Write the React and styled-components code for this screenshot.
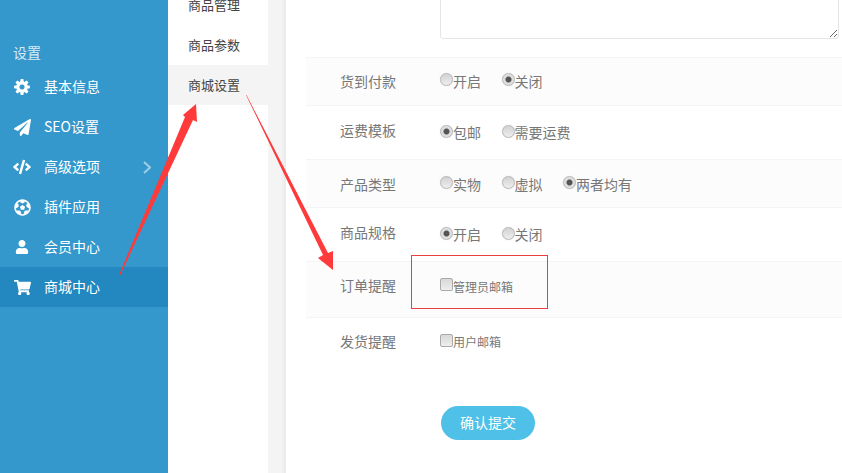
import React from "react";
import styled, { createGlobalStyle } from "styled-components";
import { FaPaperPlane, FaCode, FaFutbol, FaUser, FaShoppingCart } from "react-icons/fa";

const Global = createGlobalStyle`
  html, body { margin: 0; padding: 0; height: 473px; overflow: hidden; background: #fff; }
  body { font-family: "Noto Sans CJK SC", "Liberation Sans", sans-serif; }
`;
const Page = styled.div`
  position: relative; display: flex; width: 842px; height: 473px; overflow: hidden;
`;
const Sidebar = styled.nav`
  width: 168px; flex: none; background: #3498cc; padding-top: 44px; box-sizing: border-box;
`;
const SideTitle = styled.div`
  height: 23px; line-height: 16px; padding-left: 13px; font-size: 14px; color: #d6ebf5;
`;
const SideItem = styled.div`
  display: flex; align-items: center; height: 40px; font-size: 14px; color: #fff;
  line-height: 18px; padding-bottom: 2px; box-sizing: border-box;
  background: ${p => (p.$active ? "#2288bf" : "transparent")};
`;
const SideIcon = styled.span`
  width: 44px; flex: none; display: flex; justify-content: center; padding-top: 2px;
  font-size: ${p => p.$size}px;
  svg { display: block; }
`;
const Chevron = styled.svg`
  margin-left: auto; margin-right: 17px; margin-top: 2px; display: block;
`;
const SubNav = styled.div`
  width: 100px; flex: none; background: #fff; margin-top: -15px;
`;
const SubItem = styled.div`
  height: 40px; line-height: 39px; padding-left: 20px; font-size: 13px; color: #444;
  background: ${p => (p.$active ? "#f4f4f4" : "#fff")};
`;
const Gutter = styled.div`
  width: 18px; flex: none; background: linear-gradient(to right, #f4f4f4 70%, #eaeaea);
`;
const Main = styled.main`
  flex: 1; min-width: 0; padding-left: 20px; margin-top: -62px; background: #fff;
`;
const TextBlock = styled.div`
  padding-left: 134px; height: 119px; box-sizing: border-box;
`;
const Area = styled.textarea`
  display: block; width: 399px; height: 101px; box-sizing: border-box; margin: 0;
  border: 1px solid #e6e6e6; border-radius: 3px; background: #fff; outline: none;
`;
const Row = styled.div`
  display: flex; height: ${p => p.$h}px; box-sizing: border-box;
  background: ${p => (p.$shade ? "#fcfcfc" : "#fff")};
  ${p => (p.$shade ? "border-top: 1px solid #f4f4f4; border-bottom: 1px solid #f4f4f4;" : "")}
`;
const Label = styled.div`
  width: 134px; padding-left: 34px; box-sizing: border-box; font-size: 14px; line-height: 20px;
  color: #777; padding-top: ${p => p.$top}px;
`;
const Options = styled.div`
  display: flex; padding-top: ${p => p.$top}px; height: 20px;
`;
const Option = styled.label`
  width: 61.5px; display: flex; align-items: flex-start; font-size: 14px; line-height: 18px; color: #777; white-space: nowrap;
`;
const SmallOption = styled(Option)`
  font-size: 12px; line-height: 22px;
`;
const Radio = styled.input.attrs({ type: "radio" })`
  appearance: none; width: 13px; height: 13px; margin: ${p => p.$drop || 1}px 0 0 0; flex: none; border-radius: 50%;
  border: 1px solid #b8b8b8; box-sizing: border-box;
  box-shadow: 0 0 1px #ccc;
  background: ${p => (p.checked ? "radial-gradient(circle, #555 0 2.5px, #dcdcdc 3.5px, #e6e6e6 100%)" : "linear-gradient(#d2d2d2, #eeeeee)")};
`;
const Check = styled.input.attrs({ type: "checkbox" })`
  appearance: none; width: 13px; height: 13px; margin: ${p => p.$drop || 2}px 0 0 0; flex: none; border-radius: 2px;
  border: 1px solid #aaa; box-sizing: border-box; background: linear-gradient(#d8d8d8, #eeeeee);
`;
const Submit = styled.button`
  display: block; margin: 34px 0 0 135px; width: 94px; height: 34px; border: 0; border-radius: 17px;
  background: #4fc0e8; color: #fff; font: 14px "Noto Sans CJK SC", sans-serif; padding: 0 0 2px;
`;
const RedBox = styled.div`
  position: absolute; left: 411px; top: 255px; width: 137px; height: 54px; box-sizing: border-box;
  border: 1px solid #e8403f;
`;
const Arrows = styled.svg`
  position: absolute; left: 0; top: 0; pointer-events: none;
`;

const gearPath = (() => {
  const c = 8, pts = [];
  for (let i = 0; i < 8; i++) {
    const a = (i * Math.PI) / 4;
    [[-0.62, 5.6], [-0.3, 8], [0.3, 8], [0.62, 5.6]].forEach(([d, r]) =>
      pts.push(`${(c + r * Math.sin(a + d * 0.55)).toFixed(2)} ${(c - r * Math.cos(a + d * 0.55)).toFixed(2)}`)
    );
  }
  return `M${pts.join("L")}Z M8 5.4a2.6 2.6 0 1 0 .01 0Z`;
})();
const Gear = () => (
  <svg width="16" height="16" viewBox="0 0 16 16"><path fill="#fff" fillRule="evenodd" d={gearPath} /></svg>
);

const nav = [
  [Gear, "基本信息", 16], [FaPaperPlane, "SEO设置", 17], [FaCode, "高级选项", 18, true],
  [FaFutbol, "插件应用", 17], [FaUser, "会员中心", 14], [FaShoppingCart, "商城中心", 17, false, true],
];
const noop = () => {};
const R = ({ on, drop, children }) => (
  <Option><Radio checked={!!on} onChange={noop} $drop={drop} />{children}</Option>
);

export default function App() {
  return (
    <Page>
      <Global />
      <Sidebar>
        <SideTitle>设置</SideTitle>
        {nav.map(([Icon, text, size, more, active]) => (
          <SideItem key={text} $active={active}>
            <SideIcon $size={size}><Icon /></SideIcon>
            {text}
            {more && (
              <Chevron width="8" height="13" viewBox="0 0 8 13">
                <polyline points="1,1 7,6.5 1,12" fill="none" stroke="#a0cde6" strokeWidth="2" />
              </Chevron>
            )}
          </SideItem>
        ))}
      </Sidebar>
      <SubNav>
        <SubItem>商品管理</SubItem>
        <SubItem>商品参数</SubItem>
        <SubItem $active>商城设置</SubItem>
      </SubNav>
      <Gutter />
      <Main>
        <TextBlock><Area readOnly /></TextBlock>
        <Row $shade $h={49}>
          <Label $top={13}>货到付款</Label>
          <Options $top={14}><R>开启</R><R on>关闭</R></Options>
        </Row>
        <Row $h={53}>
          <Label $top={14}>运费模板</Label>
          <Options $top={17}><R on drop={2}>包邮</R><R drop={2}>需要运费</R></Options>
        </Row>
        <Row $shade $h={49}>
          <Label $top={14}>产品类型</Label>
          <Options $top={15}><R>实物</R><R>虚拟</R><R on>两者均有</R></Options>
        </Row>
        <Row $h={53}>
          <Label $top={14}>商品规格</Label>
          <Options $top={17}><R on drop={2}>开启</R><R drop={2}>关闭</R></Options>
        </Row>
        <Row $shade $h={57}>
          <Label $top={13}>订单提醒</Label>
          <Options $top={14}><SmallOption><Check readOnly />管理员邮箱</SmallOption></Options>
        </Row>
        <Row $h={54}>
          <Label $top={13}>发货提醒</Label>
          <Options $top={13}><SmallOption><Check readOnly $drop={3} />用户邮箱</SmallOption></Options>
        </Row>
        <Submit>确认提交</Submit>
      </Main>
      <RedBox />
      <Arrows width="842" height="473" viewBox="0 0 842 473">
        <polygon fill="#fe3a3a" points="119,275 185,117 183,115 196,104 197,122 193,120 120,275.5" />
        <polygon fill="#fe3a3a" points="246,95 246.5,95 328,253 333,251 333,270 318,258 323,255" />
      </Arrows>
    </Page>
  );
}
